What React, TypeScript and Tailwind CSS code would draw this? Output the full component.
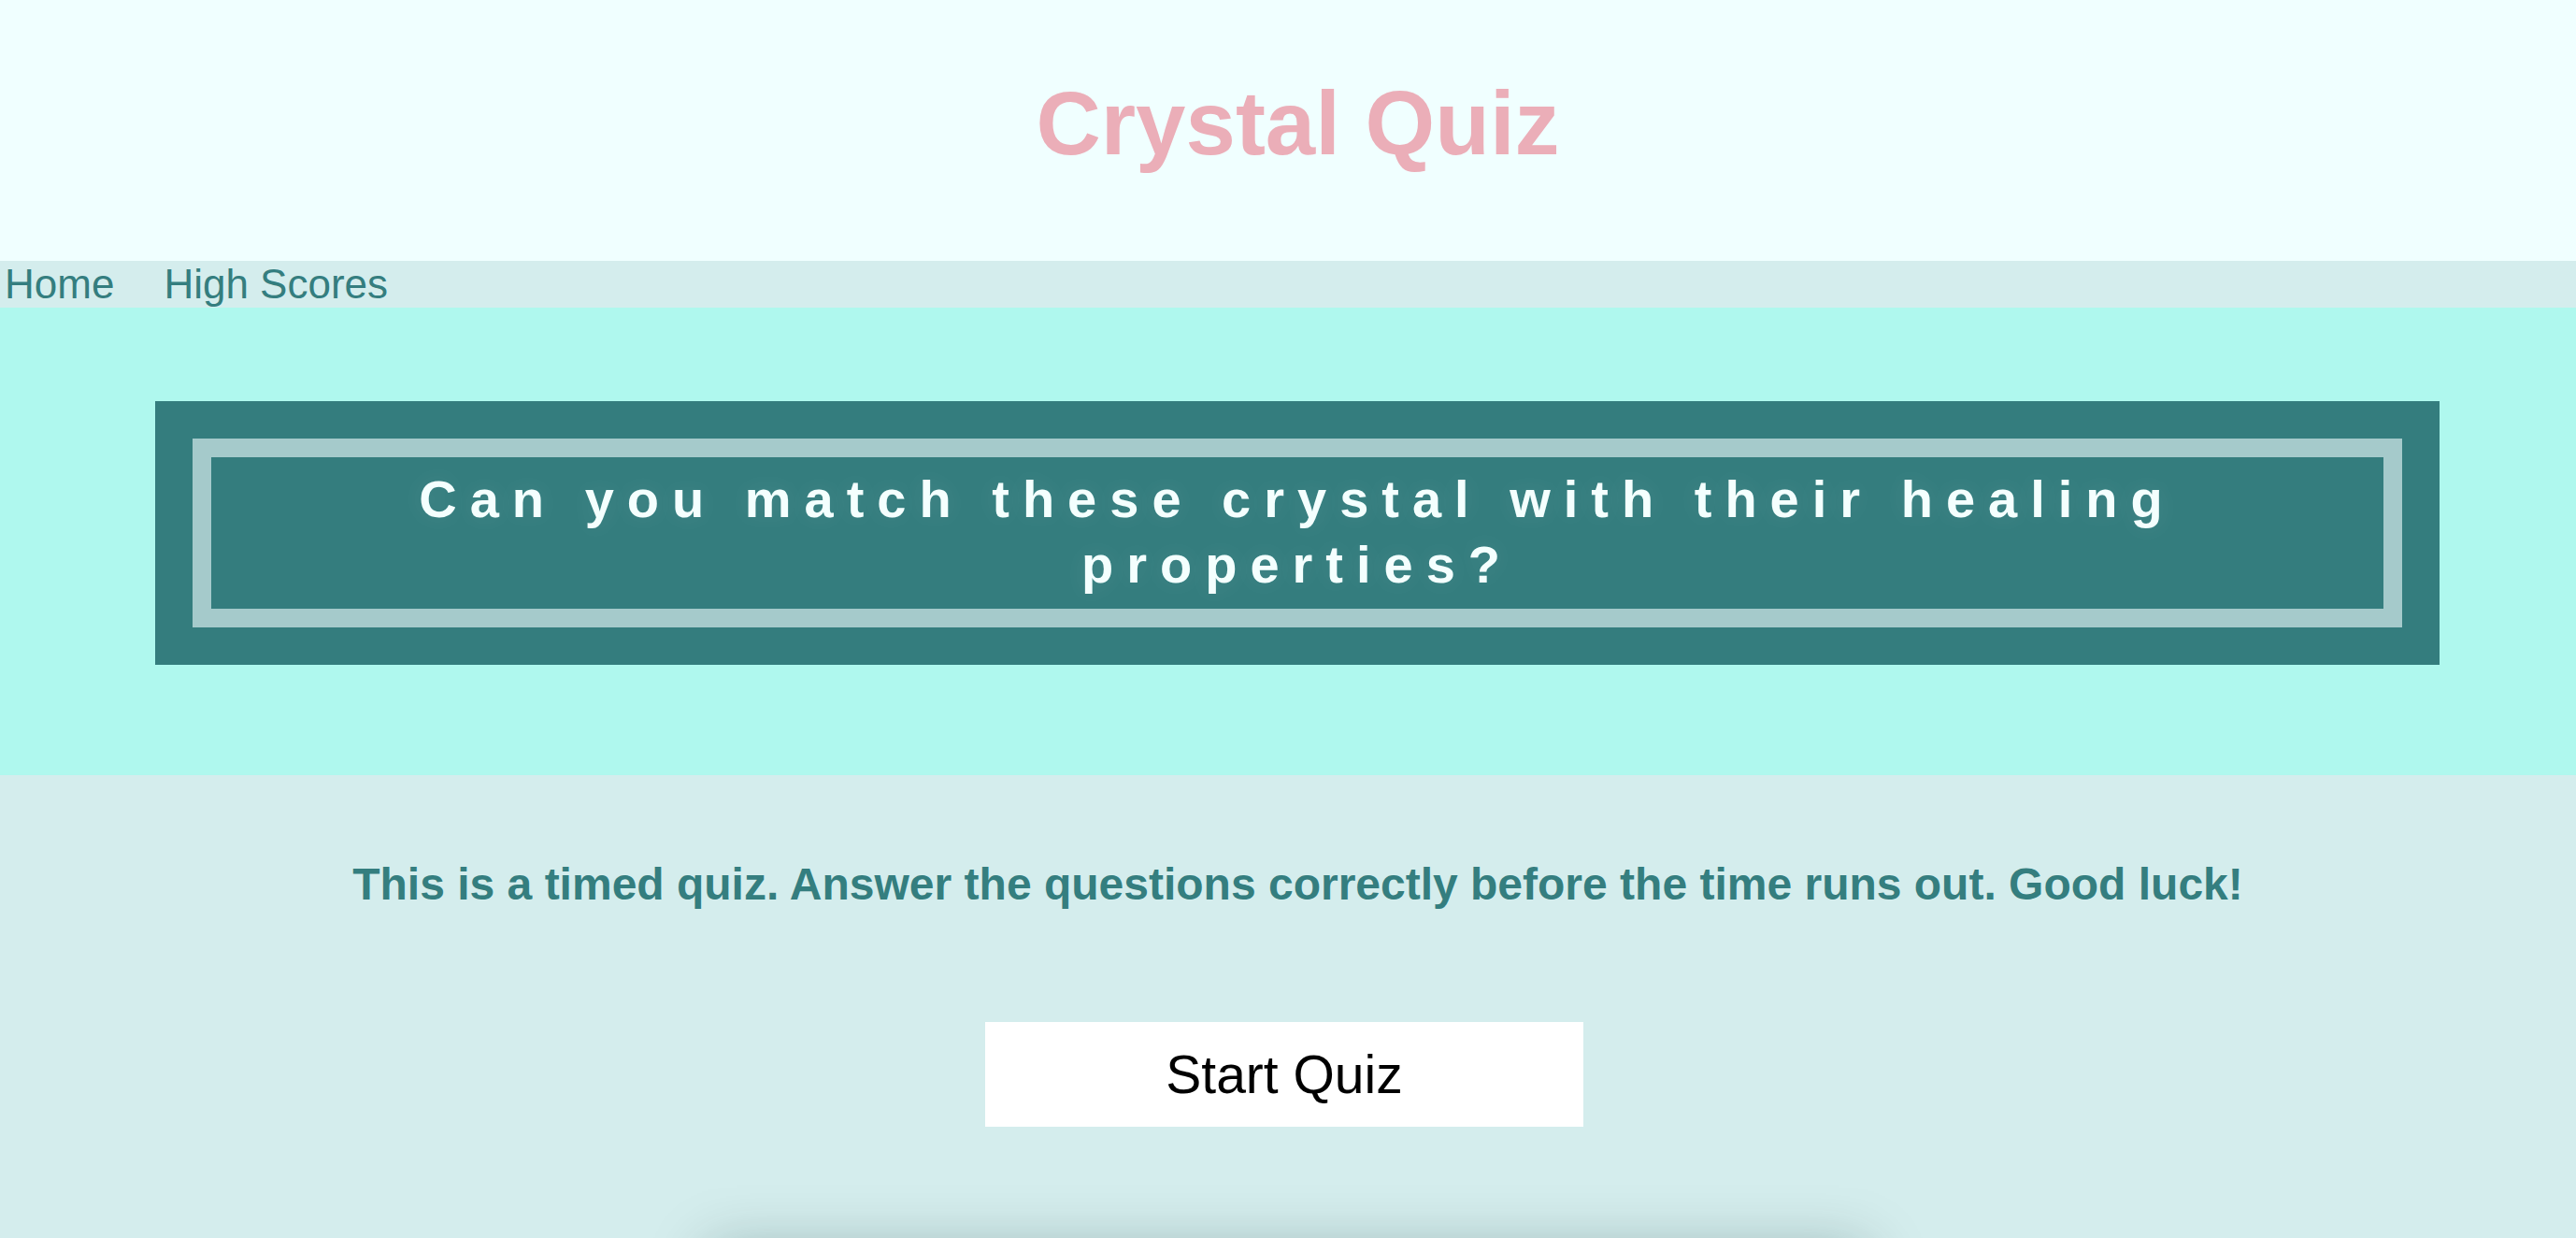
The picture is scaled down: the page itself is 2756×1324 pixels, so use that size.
export default function App() {
  return (
    <div className="min-h-screen bg-[#d4eded] font-['Liberation_Sans',Arial,sans-serif] overflow-hidden">
      {/* header */}
      <header className="h-[279px] bg-[#f0ffff] pt-[60px] pl-[21px] text-center">
        <h1 className="text-[96px] leading-normal font-bold text-[#ebaeb8]">Crystal Quiz</h1>
      </header>

      <nav className="flex gap-[53px] pl-[5px] bg-[#d4eded] text-[44px] leading-[50px] text-[#347e7f]">
        <a href="#">Home</a>
        <a href="#">High Scores</a>
      </nav>

      {/* banner */}
      <section className="bg-[#aff8ee] pt-[100px] pb-[118px] pl-[166px] pr-[146px]">
        <div className="bg-[#347d7e] p-[40px]">
          <div className="border-[20px] border-[#a5cacb] py-[10px] pb-[12px] text-center">
            <h2 className="text-[56px] leading-[70px] font-bold tracking-[0.25em] text-[#f4fffe] [text-shadow:0_0_24px_rgba(255,255,255,0.1)]">
              Can you match these crystal with their healing properties?
            </h2>
          </div>
        </div>
      </section>

      <main className="flex flex-col items-center pt-[81px]">
        <p className="pl-[21px] text-[48px] leading-normal font-bold text-[#347e7f]">
          This is a timed quiz. Answer the questions correctly before the time runs out. Good luck!
        </p>
        <button className="mt-[111px] mr-[8px] w-[640px] h-[112px] bg-white text-black text-[57px] leading-none">
          Start Quiz
        </button>
        {/* card below the fold, only its shadow shows */}
        <div className="mt-[130px] w-[1240px] h-[400px] bg-[#d4eded] shadow-[0_0_60px_rgba(0,40,40,0.28)]" />
      </main>
    </div>
  );
}
